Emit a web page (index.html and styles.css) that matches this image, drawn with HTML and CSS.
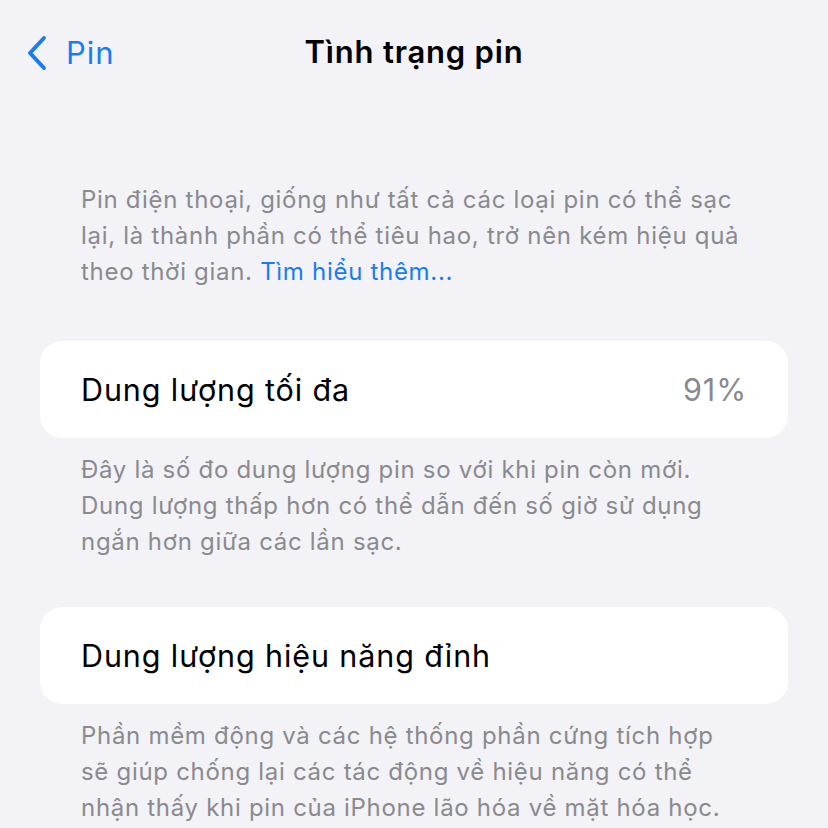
FILE: index.html
```html
<!DOCTYPE html>
<html lang="vi">

<head>
  <meta charset="UTF-8">
  <meta name="viewport" content="width=device-width, initial-scale=1.0">
  <title>Tình trạng pin</title>
  <link rel="stylesheet" href="styles.css">
</head>

<body>

  <header class="navbar">
    <a href="" class="navbar__back">
      <svg class="navbar__chevron" viewBox="0 0 20 36" width="20" height="36">
        <path d="M17 3 L3 18 L17 33" fill="none" stroke="currentColor" stroke-width="4" stroke-linecap="round"
          stroke-linejoin="round" />
      </svg>
      <span>Pin</span>
    </a>
    <h1 class="navbar__title">Tình trạng pin</h1>
  </header>

  <main class="page">
    <p class="footnote footnote_intro">
      Pin điện thoại, giống như tất cả các loại pin có thể sạc<br>
      lại, là thành phần có thể tiêu hao, trở nên kém hiệu quả<br>
      theo thời gian. <a href="" class="footnote__link">Tìm hiểu thêm...</a>
    </p>

    <section class="group">
      <div class="group__row">
        <span class="group__label">Dung lượng tối đa</span>
        <span class="group__value">91%</span>
      </div>
    </section>
    <p class="footnote">
      Đây là số đo dung lượng pin so với khi pin còn mới.<br>
      Dung lượng thấp hơn có thể dẫn đến số giờ sử dụng<br>
      ngắn hơn giữa các lần sạc.
    </p>

    <section class="group">
      <div class="group__row">
        <span class="group__label">Dung lượng hiệu năng đỉnh</span>
      </div>
    </section>
    <p class="footnote">
      Phần mềm động và các hệ thống phần cứng tích hợp<br>
      sẽ giúp chống lại các tác động về hiệu năng có thể<br>
      nhận thấy khi pin của iPhone lão hóa về mặt hóa học.
    </p>
  </main>

</body>
</html>
```

FILE: styles.css
```css
* {
  box-sizing: border-box;
  margin: 0;
  padding: 0;
}

body {
  background-color: #f2f2f7;
  font-family: Inter, "Noto Sans", sans-serif;
  color: #000;
  width: 828px;
  height: 828px;
  overflow: hidden;
}

a {
  text-decoration: none;
}

.navbar {
  position: relative;
  height: 104px;
  display: flex;
  align-items: center;
  justify-content: center;
}

.navbar__back {
  position: absolute;
  left: 27px;
  top: 34px;
  display: flex;
  align-items: center;
  gap: 19px;
  color: #1a7cf4;
  font-size: 31px;
  letter-spacing: 1px;
}

.navbar__chevron {
  display: block;
}

.navbar__title {
  font-size: 31px;
  font-weight: 600;
  letter-spacing: 0.8px;
  margin-top: -2px;
}

.page {
  padding: 78px 40px 0;
}

.footnote {
  padding: 0 41px;
  font-size: 24px;
  line-height: 36px;
  letter-spacing: 0.7px;
  color: #8a8a8e;
  white-space: nowrap;
}

.footnote_intro {
  margin-bottom: 51px;
}

.footnote__link {
  color: #1a7cf4;
}

.group {
  background-color: #fff;
  border-radius: 22px;
  margin-bottom: 14px;
}

.group__row {
  height: 97px;
  padding: 0 41px;
  display: flex;
  align-items: center;
  justify-content: space-between;
  font-size: 30.5px;
  letter-spacing: 0.9px;
}

.group__value {
  color: #8a8a8e;
}

.footnote + .group {
  margin-top: 47px;
}
```
